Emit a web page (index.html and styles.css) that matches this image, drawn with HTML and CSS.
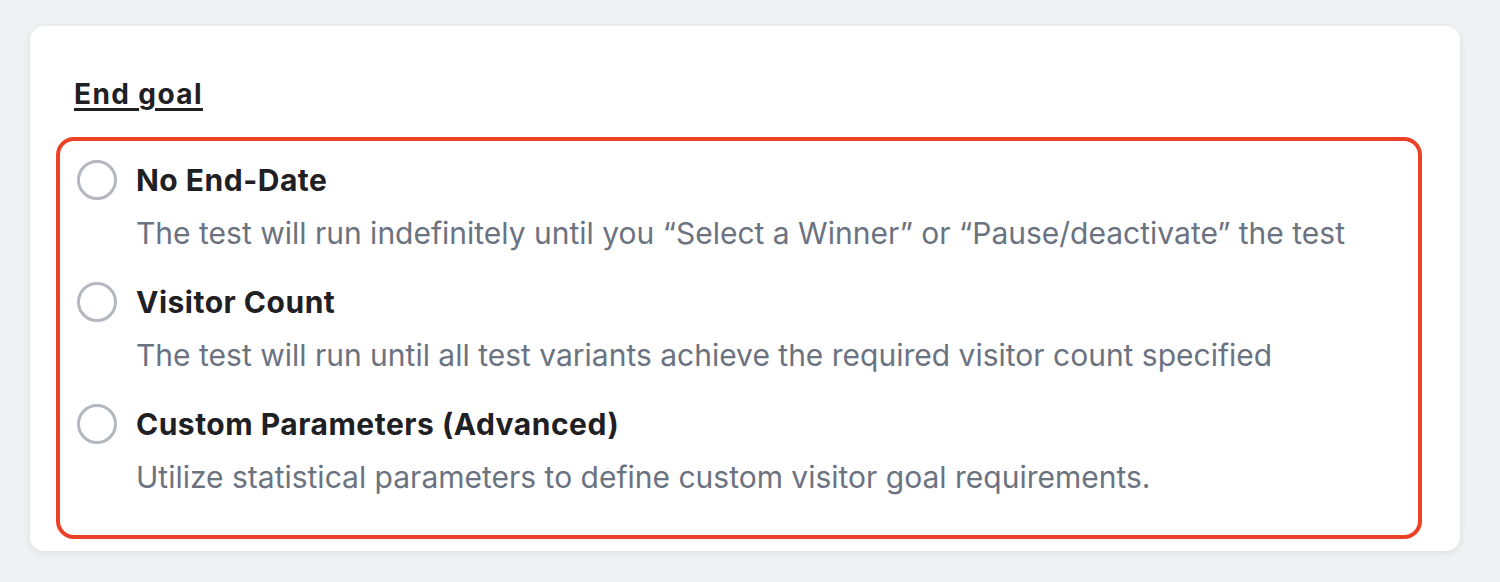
FILE: index.html
```html
<!DOCTYPE html>
<html>
<head>
<meta charset="utf-8">
<link rel="stylesheet" href="styles.css">
</head>
<body>
<div class="card">
  <h2 class="heading">End goal</h2>
  <div class="options">
    <div class="option">
      <div class="option-head"><span class="radio"></span><span class="title">No End-Date</span></div>
      <p class="desc">The test will run indefinitely until you “Select a Winner” or “Pause/deactivate” the test</p>
    </div>
    <div class="option">
      <div class="option-head"><span class="radio"></span><span class="title">Visitor Count</span></div>
      <p class="desc">The test will run until all test variants achieve the required visitor count specified</p>
    </div>
    <div class="option">
      <div class="option-head"><span class="radio"></span><span class="title">Custom Parameters (Advanced)</span></div>
      <p class="desc">Utilize statistical parameters to define custom visitor goal requirements.</p>
    </div>
  </div>
</div>
</body>
</html>
```
FILE: styles.css
```css
html, body { margin: 0; padding: 0; }
body {
  background: #f0f1f3;
  font-family: Inter, "Noto Sans", sans-serif;
  width: 1500px;
  height: 582px;
  overflow: hidden;
}
.card {
  margin: 26px 0 0 30px;
  width: 1430px;
  height: 525px;
  box-sizing: border-box;
  background: #fff;
  border-radius: 14px;
  box-shadow: 0 2px 8px rgba(0,0,0,0.08);
  padding: 53px 38px 12px 26px;
}
.heading {
  margin: 0 0 27px 18px;
  font-size: 28px;
  letter-spacing: 1.4px;
  line-height: 31px;
  font-weight: 700;
  color: #1f2024;
  text-decoration: underline;
  text-decoration-thickness: 3px;
  text-underline-offset: 4px;
}
.options {
  border: 4px solid #ec4126;
  border-radius: 18px;
  padding: 19px 17px 38px 17px;
  display: flex;
  flex-direction: column;
  gap: 29px;
}
.option-head {
  display: flex;
  align-items: center;
  gap: 19px;
  height: 40px;
}
.radio {
  width: 40px;
  height: 40px;
  box-sizing: border-box;
  border: 3px solid #b3b8bf;
  border-radius: 50%;
  flex: none;
}
.title {
  font-size: 30px;
  letter-spacing: 0.5px;
  font-weight: 700;
  color: #1f2024;
  line-height: 40px;
}
.desc {
  margin: 13px 0 0 59px;
  font-size: 30px;
  line-height: 40px;
  color: #6b7280;
}
```
